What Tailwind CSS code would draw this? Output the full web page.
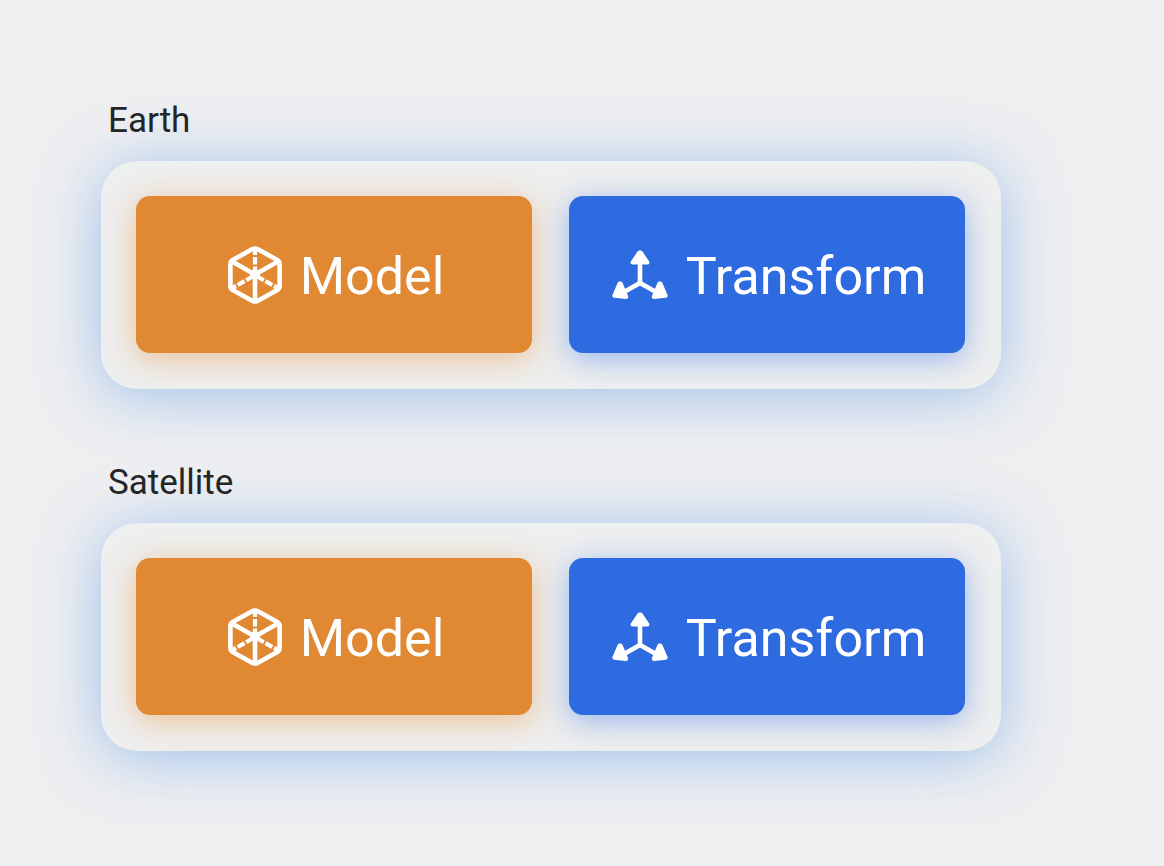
<!DOCTYPE html>
<html lang="en">
<head>
<meta charset="utf-8">
<meta name="viewport" content="width=device-width, initial-scale=1">
<title>Entities</title>
<script src="https://cdn.jsdelivr.net/npm/@tailwindcss/browser@4"></script>
</head>
<body class="min-h-screen bg-[#eeeff1] font-['Roboto','Liberation_Sans',sans-serif] text-[#232527]">
<svg class="hidden" aria-hidden="true">
  <symbol id="cube" viewBox="0 0 54 58">
    <g fill="none" stroke="currentColor" stroke-width="4.6" stroke-linejoin="round">
      <path d="M24.5 3.1Q27 1.8 29.5 3.1L49.3 14Q51.6 15.4 51.6 18V40Q51.6 42.6 49.3 44L29.5 54.9Q27 56.2 24.5 54.9L4.7 44Q2.4 42.6 2.4 40V18Q2.4 15.4 4.7 14Z"/>
      <path d="M4 15.5L27 28.5L50 15.5M27 28.5V55"/>
      <path stroke-width="4.2" d="M27 4V9M27 11V18.5M27 20.5V28M4 42L8 40M9.7 39L16.5 35.1M18.2 34.2L27 29M50 42L46 40M44.3 39L37.5 35.1M35.8 34.2L27 29"/>
    </g>
    <circle cx="27" cy="28.5" r="5" fill="currentColor"/>
  </symbol>
  <symbol id="axes" viewBox="0 0 56 50">
    <g fill="currentColor" stroke="currentColor" stroke-linejoin="round">
      <path fill="none" stroke-width="4.6" d="M28 12V33L12 42M28 33L44 42"/>
      <path stroke-width="4.4" d="M27.5 2.6L20.8 12.4H35.2L28.5 2.6ZM7.6 33.8L2.6 45.6L14 46.8L8.6 33.8ZM48.4 33.8L53.4 45.6L42 46.8L47.4 33.8Z"/>
    </g>
  </symbol>
</svg>
<main class="flex flex-col gap-[73px] pt-[100px] pr-[163px] pb-12 pl-[101px]">
  <section>
    <h2 class="relative z-10 px-[7px] text-[35px] leading-[42px]">Earth</h2>
    <div class="mt-[19px] flex gap-[37px] rounded-[36px] bg-[#eeefef] pt-[35px] pr-9 pb-9 pl-[35px] shadow-[0_6px_60px_rgba(95,155,230,0.55)]">
      <button class="flex h-[157px] flex-1 items-center justify-center gap-[18px] rounded-[14px] bg-[#e08832] pl-1 text-[52px] leading-none text-white shadow-[0_6px_30px_rgba(235,150,65,0.5)]">
        <svg class="h-[58px] w-[54px] shrink-0" aria-hidden="true"><use href="#cube"/></svg><span class="pt-1">Model</span>
      </button>
      <button class="flex h-[157px] flex-1 items-center justify-center gap-[18px] rounded-[14px] bg-[#2e6be0] pl-1 text-[52px] leading-none text-white shadow-[0_6px_30px_rgba(70,125,235,0.5)]">
        <svg class="h-[50px] w-[56px] shrink-0" aria-hidden="true"><use href="#axes"/></svg><span class="pt-1">Transform</span>
      </button>
    </div>
  </section>
  <section>
    <h2 class="relative z-10 px-[7px] text-[35px] leading-[42px]">Satellite</h2>
    <div class="mt-[19px] flex gap-[37px] rounded-[36px] bg-[#eeefef] pt-[35px] pr-9 pb-9 pl-[35px] shadow-[0_6px_60px_rgba(95,155,230,0.55)]">
      <button class="flex h-[157px] flex-1 items-center justify-center gap-[18px] rounded-[14px] bg-[#e08832] pl-1 text-[52px] leading-none text-white shadow-[0_6px_30px_rgba(235,150,65,0.5)]">
        <svg class="h-[58px] w-[54px] shrink-0" aria-hidden="true"><use href="#cube"/></svg><span class="pt-1">Model</span>
      </button>
      <button class="flex h-[157px] flex-1 items-center justify-center gap-[18px] rounded-[14px] bg-[#2e6be0] pl-1 text-[52px] leading-none text-white shadow-[0_6px_30px_rgba(70,125,235,0.5)]">
        <svg class="h-[50px] w-[56px] shrink-0" aria-hidden="true"><use href="#axes"/></svg><span class="pt-1">Transform</span>
      </button>
    </div>
  </section>
</main>
</body>
</html>
